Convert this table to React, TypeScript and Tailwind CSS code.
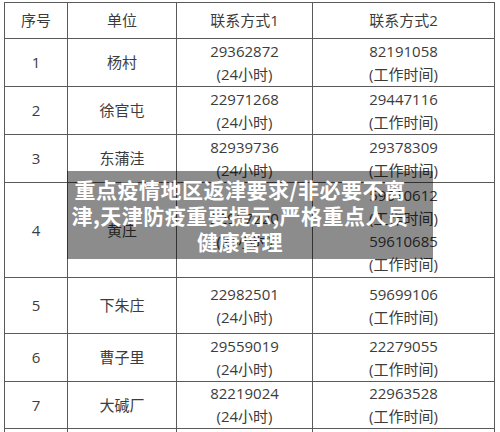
const rows = [
  { no: "1", unit: "杨村", c1: ["29362872", "(24小时)"], c2: ["82191058", "(工作时间)"], h: "h-[48px]" },
  { no: "2", unit: "徐官屯", c1: ["22971268", "(24小时)"], c2: ["29447116", "(工作时间)"], h: "h-[48px]" },
  { no: "3", unit: "东蒲洼", c1: ["82939736", "(24小时)"], c2: ["29378309", "(工作时间)"], h: "h-[48px]" },
  {
    no: "4",
    unit: "黄庄",
    c1: ["22957220", "(24小时)"],
    c2: ["59610612", "(工作时间)", "59610685", "(工作时间)"],
    h: "h-[95px]",
  },
  { no: "5", unit: "下朱庄", c1: ["22982501", "(24小时)"], c2: ["59699106", "(工作时间)"], h: "h-[56px]" },
  { no: "6", unit: "曹子里", c1: ["29559019", "(24小时)"], c2: ["22279055", "(工作时间)"], h: "h-[48px]" },
  { no: "7", unit: "大碱厂", c1: ["82219024", "(24小时)"], c2: ["22963528", "(工作时间)"], h: "h-[46px]" },
];

const cell = "border border-[#5a5a5a] text-center align-middle p-0";

export default function App() {
  return (
    <div
      className="relative h-[432px] w-[500px] overflow-hidden bg-white pl-[4px] pt-[2px] text-[15px] leading-[23px] text-[#3c3c3c]"
      style={{ fontFamily: '"Open Sans", "Noto Sans CJK SC", sans-serif' }}
    >
      <table className="w-[490px] table-fixed border-collapse">
        <colgroup>
          <col className="w-[63px]" />
          <col className="w-[109px]" />
          <col className="w-[136px]" />
          <col className="w-[182px]" />
        </colgroup>
        <thead>
          <tr className="h-[36px]">
            <th className={`${cell} font-normal`}>序号</th>
            <th className={`${cell} font-normal`}>单位</th>
            <th className={`${cell} font-normal`}>联系方式1</th>
            <th className={`${cell} font-normal`}>联系方式2</th>
          </tr>
        </thead>
        <tbody>
          {rows.map((r) => (
            <tr key={r.no} className={r.h}>
              <td className={cell}>{r.no}</td>
              <td className={cell}>{r.unit}</td>
              <td className={cell}>
                {r.c1.map((t, i) => (
                  <div key={i}>{t}</div>
                ))}
              </td>
              <td className={cell}>
                {r.c2.map((t, i) => (
                  <div key={i}>{t}</div>
                ))}
              </td>
            </tr>
          ))}
          <tr className="h-[10px]">
            <td className={cell}></td>
            <td className={cell}></td>
            <td className={cell}></td>
            <td className={cell}></td>
          </tr>
        </tbody>
      </table>

      {/* title overlay */}
      <div
        className="absolute left-[67px] top-[171px] flex h-[88px] w-[366px] items-center justify-center bg-black/45 pr-[20px]"
        style={{ fontFamily: '"Noto Sans CJK SC", sans-serif' }}
      >
        <p className="whitespace-nowrap text-center text-[21px] font-bold leading-[26px] tracking-[0.5px] text-white">
          重点疫情地区返津要求/非必要不离
          <br />
          津,天津防疫重要提示,严格重点人员
          <br />
          健康管理
        </p>
      </div>
    </div>
  );
}
